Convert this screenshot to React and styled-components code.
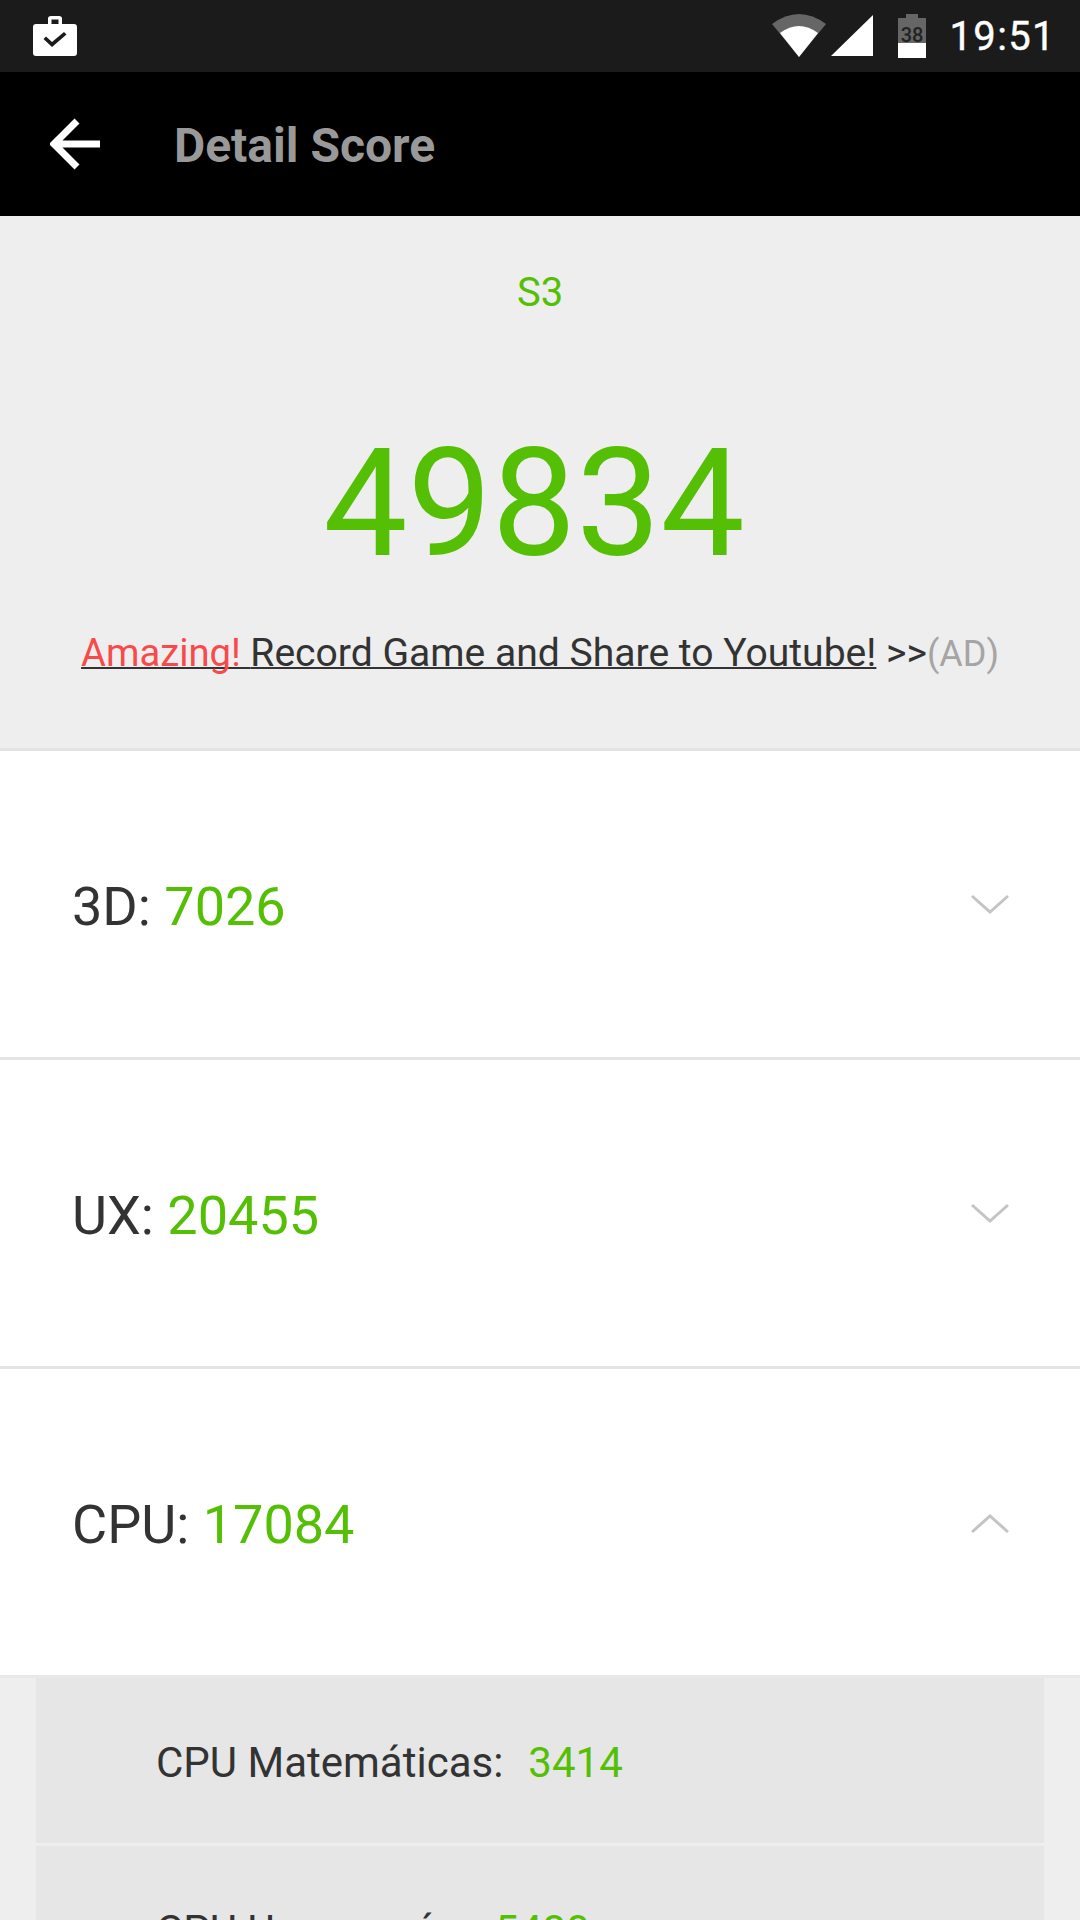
import React from 'react'
import styled, {createGlobalStyle} from 'styled-components'

const GlobalStyle = createGlobalStyle`
  html, body {
    margin: 0;
    padding: 0;
    background: #eee;
  }
  body {
    font-family: Roboto, 'Noto Sans', sans-serif;
  }
`

const Page = styled.div`
  width: 1080px;
  height: 1920px;
  overflow: hidden;
  background: #eee;
`

const StatusBar = styled.div`
  height: 72px;
  background: #1b1b1b;
  display: flex;
  align-items: center;
  padding: 0 24px 0 33px;
  color: #fff;
`

const StatusRight = styled.div`
  margin-left: auto;
  display: flex;
  align-items: center;
`

const Clock = styled.span`
  font-size: 40px;
  letter-spacing: 1.4px;
  margin-left: 22px;
  -webkit-text-stroke: 0.4px #fff;
`

const AppBar = styled.div`
  height: 144px;
  background: #000;
  display: flex;
  align-items: center;
  padding-left: 50px;
`

const Title = styled.div`
  margin-left: 72px;
  padding-top: 2px;
  color: #999;
  font-size: 48px;
  font-weight: 700;
`

const Summary = styled.div`
  height: 532px;
  border-bottom: 3px solid #e4e4e4;
  display: flex;
  flex-direction: column;
  align-items: center;
`

const Device = styled.div`
  margin-top: 53px;
  color: #55bf06;
  font-size: 40px;
  line-height: 48px;
`

const Total = styled.div`
  margin-top: 97px;
  margin-right: 12px;
  color: #55bf06;
  font-size: 150px;
  line-height: 180px;
`

const Promo = styled.div`
  margin-top: 35px;
  font-size: 39.1px;
  line-height: 48px;
  color: #333;
`

const PromoLink = styled.span`
  text-decoration: underline;
  text-decoration-thickness: 2px;
  text-decoration-skip-ink: none;
`

const Red = styled.span`
  color: #f74b4b;
  font-size: 38.2px;
`

const Muted = styled.span`
  color: #a5a5a5;
  font-size: 36px;
`

const Row = styled.div`
  height: 306px;
  background: #fff;
  border-bottom: 3px solid ${props => (props.$open ? '#e9e9e9' : '#e4e4e4')};
  display: flex;
  align-items: center;
  justify-content: space-between;
  padding: 0 71px 0 72px;
  font-size: 54px;
  color: #333;
`

const RowLabel = styled.span`
  padding-top: 4px;
`

const ChevronIcon = styled.svg`
  margin-top: 2px;
`

const Score = styled.span`
  color: #55bf06;
`

const SubList = styled.div`
  margin: 0 36px;
  display: flex;
  flex-direction: column;
  gap: 3px;
`

const SubRow = styled.div`
  height: 165px;
  background: #e6e6e6;
  display: flex;
  align-items: center;
  padding: 3px 0 0 120px;
  box-sizing: border-box;
  font-size: 42px;
  color: #333;
`

const SubScore = styled.span`
  color: #55bf06;
  margin-left: 25px;
`

const Chevron = ({up}) => (
  <ChevronIcon width="38" height="22" viewBox="0 0 38 22" fill="none">
    <path
      d={up ? 'M1 20 L19 4 L37 20' : 'M1 2 L19 18 L37 2'}
      stroke="#c4c4c4"
      strokeWidth="3"
    />
  </ChevronIcon>
)

const rows = [
  {label: '3D:', score: '7026'},
  {label: 'UX:', score: '20455'},
  {label: 'CPU:', score: '17084', open: true}
]

const subRows = [
  {label: 'CPU Matemáticas:', score: '3414'},
  {label: 'CPU Uso común:', score: '5480'}
]

export default function App() {
  return (
    <Page>
      <GlobalStyle />
      <StatusBar>
        <svg width="44" height="42" viewBox="0 0 44 42">
          <path
            fill="#fff"
            fillRule="evenodd"
            d="M15 3.500 Q15 1 18 1 H26 Q29 1 29 3.500 V9 H41 Q44 9 44 12 V38 Q44 41 41 41 H3 Q0 41 0 38 V12 Q0 9 3 9 H15 Z M18.500 4.500 V9 H25.500 V4.500 Z M19 32 L10.500 24 L13 21.500 L19 27 L31 17 L33.500 19.500 Z"
          />
        </svg>
        <StatusRight>
          <svg width="54" height="44" viewBox="0 0 54 44">
            <path fill="#666" d="M0 10 Q27 -10 54 10 L27 43 Z" />
            <path fill="#fff" d="M8 19 Q27 5 46 19 L27 43 Z" />
          </svg>
          <svg width="44" height="44" viewBox="0 0 44 44" style={{marginLeft: 5}}>
            <path fill="#fff" d="M0 42 L42 1 V42 Z" />
          </svg>
          <svg width="30" height="44" viewBox="0 0 30 44" style={{marginLeft: 22}}>
            <path fill="#666" d="M9 0 H21 V4 H29 V30 H1 V4 H9 Z" />
            <path fill="#fff" d="M1 29 H29 V44 H1 Z" />
            <text
              x="15"
              y="28"
              textAnchor="middle"
              fontSize="20"
              fontWeight="500"
              fontFamily="Roboto, sans-serif"
              fill="#222"
            >
              38
            </text>
          </svg>
          <Clock>19:51</Clock>
        </StatusRight>
      </StatusBar>
      <AppBar>
        <svg width="52" height="52" viewBox="0 0 52 52" fill="none">
          <path d="M27 3 L4 26 L27 49 M4 26 H50" stroke="#fff" strokeWidth="7" />
        </svg>
        <Title>Detail Score</Title>
      </AppBar>
      <Summary>
        <Device>S3</Device>
        <Total>49834</Total>
        <Promo>
          <PromoLink>
            <Red>Amazing! </Red>Record Game and Share to Youtube!
          </PromoLink>{' '}
          &gt;&gt;<Muted>(AD)</Muted>
        </Promo>
      </Summary>
      {rows.map(row => (
        <Row key={row.label} $open={row.open}>
          <RowLabel>
            {row.label} <Score>{row.score}</Score>
          </RowLabel>
          <Chevron up={row.open} />
        </Row>
      ))}
      <SubList>
        {subRows.map(row => (
          <SubRow key={row.label}>
            {row.label}
            <SubScore>{row.score}</SubScore>
          </SubRow>
        ))}
      </SubList>
    </Page>
  )
}
